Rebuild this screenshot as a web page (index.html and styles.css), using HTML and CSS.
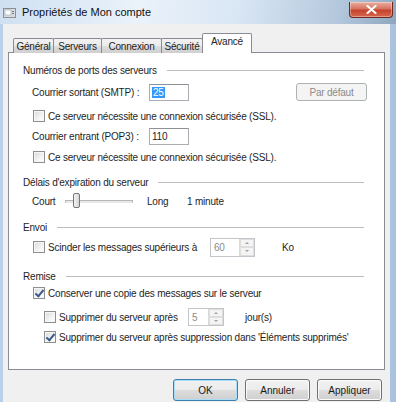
FILE: index.html
```html
<!DOCTYPE html>
<html lang="fr">
<head>
    <meta charset="UTF-8">
    <title>Propriétés de Mon compte</title>
    <link rel="stylesheet" href="styles.css">
</head>
<body>
    <div class="window">
        <div class="titlebar">
            <svg class="app-icon" width="14" height="12" viewBox="0 0 14 12">
                <rect x="0.5" y="1.5" width="12" height="9" fill="#d9dde2" stroke="#8a9097"/>
                <rect x="2" y="3" width="6" height="5" fill="#fff" stroke="#9aa2ab" stroke-width="0.6"/>
                <rect x="9" y="4" width="2" height="1" fill="#6b7785"/>
                <rect x="9" y="6" width="2" height="1" fill="#6b7785"/>
            </svg>
            <span class="title">Propriétés de Mon compte</span>
            <div class="close">
                <svg width="11" height="9" viewBox="0 0 11 9">
                    <path d="M1.5 1 L9.5 8 M9.5 1 L1.5 8" stroke="#fff" stroke-width="2.2" stroke-linecap="round"/>
                </svg>
            </div>
        </div>

        <div class="client">
            <div class="tabs">
                <div class="tab tab-general">Général</div>
                <div class="tab tab-servers">Serveurs</div>
                <div class="tab tab-conn">Connexion</div>
                <div class="tab tab-security">Sécurité</div>
                <div class="tab tab-adv active">Avancé</div>
            </div>

            <div class="panel">
                <!-- Numéros de ports -->
                <div class="group g-ports">
                    <div class="group-title">Numéros de ports des serveurs</div>
                    <div class="row row-smtp">
                        <span class="field-label">Courrier sortant (SMTP) :</span>
                        <div class="textbox"><span class="sel">25</span></div>
                        <div class="btn-small">Par défaut</div>
                    </div>
                    <div class="row row-cb">
                        <span class="checkbox"></span>
                        <span>Ce serveur nécessite une connexion sécurisée (SSL).</span>
                    </div>
                    <div class="row row-pop">
                        <span class="field-label">Courrier entrant (POP3) :</span>
                        <div class="textbox">110</div>
                    </div>
                    <div class="row row-cb2">
                        <span class="checkbox"></span>
                        <span>Ce serveur nécessite une connexion sécurisée (SSL).</span>
                    </div>
                </div>

                <!-- Délais -->
                <div class="group g-delay">
                    <div class="group-title">Délais d'expiration du serveur</div>
                    <div class="row row-slider">
                        <span class="court">Court</span>
                        <div class="trackbar">
                            <div class="track"></div>
                            <div class="thumb"></div>
                        </div>
                        <span class="long">Long</span>
                        <span class="minute">1 minute</span>
                    </div>
                </div>

                <!-- Envoi -->
                <div class="group g-send">
                    <div class="group-title">Envoi</div>
                    <div class="row row-split">
                        <span class="checkbox"></span>
                        <span class="split-label">Scinder les messages supérieurs à</span>
                        <div class="spin spin-size">
                            <span class="spin-value">60</span>
                            <div class="spin-btns">
                                <span class="spin-up"></span>
                                <span class="spin-down"></span>
                            </div>
                        </div>
                        <span class="unit-ko">Ko</span>
                    </div>
                </div>

                <!-- Remise -->
                <div class="group g-deliver">
                    <div class="group-title">Remise</div>
                    <div class="row row-keep">
                        <span class="checkbox checked"></span>
                        <span>Conserver une copie des messages sur le serveur</span>
                    </div>
                    <div class="row row-after sub">
                        <span class="checkbox"></span>
                        <span class="after-label">Supprimer du serveur après</span>
                        <div class="spin spin-days">
                            <span class="spin-value">5</span>
                            <div class="spin-btns">
                                <span class="spin-up"></span>
                                <span class="spin-down"></span>
                            </div>
                        </div>
                        <span class="unit-days">jour(s)</span>
                    </div>
                    <div class="row row-deleted sub">
                        <span class="checkbox checked"></span>
                        <span>Supprimer du serveur après suppression dans 'Éléments supprimés'</span>
                    </div>
                </div>
            </div>

            <div class="buttons">
                <button class="btn default">OK</button>
                <button class="btn">Annuler</button>
                <button class="btn">Appliquer</button>
            </div>
        </div>
    </div>
</body>
</html>
```

FILE: styles.css
```css
body { margin: 0; font-family: "Liberation Sans", Arial, sans-serif; font-size: 10px; color: #1e1e1e; letter-spacing: -0.2px; }

.window { width: 396px; height: 402px; display: flex; flex-direction: column; overflow: hidden; background: linear-gradient(90deg, #b9d0ea 0%, #cfe0f2 50%, #a9c3df 100%); }

/* title bar */
.titlebar { height: 24px; flex: none; display: flex; align-items: center; background: linear-gradient(100deg, #cfe0f2 0%, #eaf2fa 35%, #d9e6f4 60%, #b4c8dd 85%, #8ea6c0 100%); }
.app-icon { margin-left: 3px; margin-top: 2px; }
.title { margin-left: 5px; font-size: 11px; letter-spacing: 0; color: #111; }
.close { margin-left: auto; margin-right: 3px; align-self: flex-start; margin-top: 2px; width: 42px; height: 15px; border: 1px solid #6d2a20; border-top: none; border-radius: 0 0 4px 4px; background: linear-gradient(#eab0a2 0%, #d7735f 45%, #c4432f 55%, #d9664c 100%); display: flex; align-items: center; justify-content: center; box-shadow: inset 0 0 0 1px rgba(255,255,255,0.35); }

/* client area */
.client { flex: 1; margin: 0 6px 0 3px; padding: 9px 5px 0 5px; background: #f0f0f0; display: flex; flex-direction: column; }

.tabs { display: flex; align-items: flex-end; height: 20px; padding-left: 5px; margin-bottom: -1px; position: relative; z-index: 1; }
.tab { height: 15px; box-sizing: border-box; border: 1px solid #898c95; border-bottom: none; margin-right: -1px; display: flex; align-items: center; justify-content: center; background: linear-gradient(#f2f2f2 0%, #ebebeb 50%, #dddddd 51%, #cfcfcf 100%); border-radius: 2px 2px 0 0; }
.tab-general { width: 41px; }
.tab-servers { width: 49px; }
.tab-conn { width: 61px; }
.tab-security { width: 42px; }
.tab.active { width: 50px; height: 20px; margin: 0; padding-bottom: 4px; background: #fff; }

.panel { height: 318px; flex: none; box-sizing: border-box; border: 1px solid #898c95; background: #fff; padding: 0 20px 0 14px; }

/* groups */
.group { margin-top: 7px; }
.g-ports { margin-top: 10px; }
.g-deliver { margin-top: 9px; }
.group-title { height: 14px; display: flex; align-items: center; }
.group-title::after { content: ""; flex: 1; height: 1px; background: #bcbcbc; margin-left: 10px; }

.row { display: flex; align-items: center; height: 20px; padding-left: 9px; }
.row-smtp { height: 28px; margin-top: 1px; }
.row-cb2 { height: 22px; }
.row-slider { height: 24px; }
.row-split { height: 26px; padding-left: 10px; }
.row-keep { padding-left: 10px; }
.row-cb, .row-cb2 { padding-left: 10px; }
.row-after { height: 26px; margin-top: 1px; }
.row-deleted { height: 14px; }
.row.sub { padding-left: 21px; }

.field-label { width: 117px; }

.textbox { width: 40px; height: 17px; box-sizing: border-box; border: 1px solid #abadb3; border-top-color: #8e9297; background: #fff; padding-left: 2px; display: flex; align-items: center; }
.sel { background: #3399ff; color: #fff; padding: 0 1px; }

.btn-small { margin-left: auto; margin-right: -3px; width: 71px; height: 18px; box-sizing: border-box; border: 1px solid #adb2b5; border-radius: 3px; background: #f4f4f4; color: #8b8b8b; display: flex; align-items: center; justify-content: center; }

/* checkbox */
.checkbox { width: 12px; height: 12px; box-sizing: border-box; border: 1px solid #8e8f8f; background: linear-gradient(135deg, #d8d8d8 0%, #f4f4f4 60%, #ffffff 100%); box-shadow: inset 0 0 0 1px #f6f6f6; margin-right: 3px; flex: none; position: relative; }
.checkbox.checked::after { content: ""; position: absolute; left: 3px; top: 0px; width: 3px; height: 7px; border: solid #3d5a8a; border-width: 0 2px 2px 0; transform: rotate(40deg); }

/* trackbar */
.court { width: 33px; }
.trackbar { position: relative; width: 68px; height: 20px; display: flex; align-items: center; }
.track { width: 100%; height: 3px; box-sizing: border-box; border: 1px solid #b6b6b6; border-bottom-color: #e6e6e6; background: #e7eaea; }
.thumb { position: absolute; left: 8px; top: 2px; width: 7px; height: 15px; box-sizing: border-box; border: 1px solid #767676; border-radius: 2px; background: linear-gradient(90deg, #f2f2f2, #d6d6d6); }
.long { margin-left: 14px; width: 40px; }

/* spin boxes */
.split-label { width: 162px; }
.after-label { width: 129px; }
.spin { height: 19px; box-sizing: border-box; border: 1px solid #c2c5ca; background: #fff; display: flex; }
.spin-size { width: 45px; }
.spin-days { width: 36px; height: 18px; }
.spin-value { flex: 1; padding-left: 3px; color: #8b8b8b; display: flex; align-items: center; }
.spin-btns { width: 14px; display: flex; flex-direction: column; border-left: 1px solid #d9d9d9; }
.spin-up, .spin-down { flex: 1; background: #f4f4f4; border: 1px solid #dedede; position: relative; }
.spin-up::after, .spin-down::after { content: ""; position: absolute; left: 4px; border-left: 2px solid transparent; border-right: 2px solid transparent; }
.spin-up::after { top: 2px; border-bottom: 2px solid #a0a0a0; }
.spin-down::after { top: 2px; border-top: 2px solid #a0a0a0; }
.unit-ko { margin-left: 27px; }
.unit-days { margin-left: 21px; }

/* bottom buttons */
.buttons { display: flex; justify-content: flex-end; gap: 7px; margin-top: 9px; padding-right: 3px; }
.btn { width: 65px; height: 22px; border: 1px solid #707070; border-radius: 3px; background: linear-gradient(#f2f2f2 0%, #ebebeb 50%, #dddddd 51%, #cfcfcf 100%); box-shadow: inset 0 0 0 1px #fbfbfb; font: inherit; color: #1a1a1a; padding: 0; }
.btn.default { border-color: #3c7fb1; box-shadow: inset 0 0 0 1px #a9dcf6; }
```
